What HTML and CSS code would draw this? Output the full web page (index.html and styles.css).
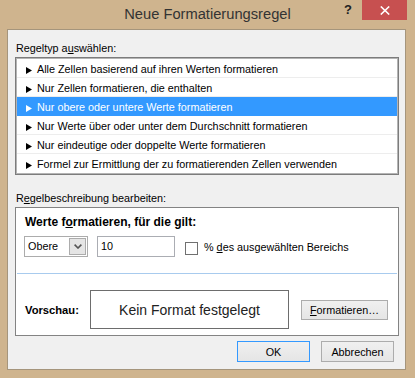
FILE: index.html
```html
<!DOCTYPE html>
<html lang="de">
<head>
<meta charset="utf-8">
<title>Neue Formatierungsregel</title>
<link rel="stylesheet" href="styles.css">
</head>
<body>
<div class="window">
  <div class="titlebar">
    <div class="tb-spacer"></div>
    <div class="title">Neue Formatierungsregel</div>
    <div class="tb-buttons">
      <span class="help">?</span>
      <span class="close"><svg width="10" height="9" viewBox="0 0 10 9"><path d="M0.8 0.5 L9.2 8.5 M9.2 0.5 L0.8 8.5" stroke="#fff" stroke-width="1.6" fill="none"/></svg></span>
    </div>
  </div>
  <div class="client">
    <div class="label">Regeltyp a<u>u</u>swählen:</div>
    <ul class="list">
      <li class="row"><svg class="arrow" viewBox="0 0 6 7"><polygon points="0,0 6,3.5 0,7"/></svg><span>Alle Zellen basierend auf ihren Werten formatieren</span></li>
      <li class="row"><svg class="arrow" viewBox="0 0 6 7"><polygon points="0,0 6,3.5 0,7"/></svg><span>Nur Zellen formatieren, die enthalten</span></li>
      <li class="row selected"><svg class="arrow" viewBox="0 0 6 7"><polygon points="0,0 6,3.5 0,7"/></svg><span>Nur obere oder untere Werte formatieren</span></li>
      <li class="row"><svg class="arrow" viewBox="0 0 6 7"><polygon points="0,0 6,3.5 0,7"/></svg><span>Nur Werte über oder unter dem Durchschnitt formatieren</span></li>
      <li class="row"><svg class="arrow" viewBox="0 0 6 7"><polygon points="0,0 6,3.5 0,7"/></svg><span>Nur eindeutige oder doppelte Werte formatieren</span></li>
      <li class="row"><svg class="arrow" viewBox="0 0 6 7"><polygon points="0,0 6,3.5 0,7"/></svg><span>Formel zur Ermittlung der zu formatierenden Zellen verwenden</span></li>
    </ul>
    <div class="label label2">R<u>e</u>gelbeschreibung bearbeiten:</div>
    <div class="panel">
      <div class="heading">Werte f<u>o</u>rmatieren, für die gilt:</div>
      <div class="controls">
        <div class="combo"><span class="combo-text">Obere</span><span class="combo-btn"><svg width="8" height="5" viewBox="0 0 8 5"><path d="M0.6 0.6 L4 4 L7.4 0.6" stroke="#555" stroke-width="1.6" fill="none"/></svg></span></div>
        <div class="input">10</div>
        <span class="checkbox"></span>
        <span class="check-label">% <u>d</u>es ausgewählten Bereichs</span>
      </div>
      <div class="sep"></div>
      <div class="preview-row">
        <div class="preview-label">Vorschau:</div>
        <div class="preview-box">Kein Format festgelegt</div>
        <div class="btn btn-format"><span><u>F</u>ormatieren…</span></div>
      </div>
    </div>
    <div class="actions">
      <div class="btn btn-ok">OK</div>
      <div class="btn">Abbrechen</div>
    </div>
  </div>
</div>
</body>
</html>
```

FILE: styles.css
```css
* { box-sizing: border-box; }
html, body { margin: 0; padding: 0; }
body {
  width: 415px;
  height: 378px;
  overflow: hidden;
  font-family: "Liberation Sans", Arial, sans-serif;
  font-size: 10.8px;
  color: #000;
}
u { text-decoration: underline; text-underline-offset: 1px; }

.window {
  width: 415px;
  height: 378px;
  background: #CFB48E;
  display: flex;
  flex-direction: column;
}

.titlebar {
  height: 29px;
  display: grid;
  grid-template-columns: 1fr auto 1fr;
}
.title {
  font-size: 14.7px;
  line-height: 29px;
  color: #333;
  white-space: nowrap;
}
.tb-buttons {
  display: flex;
  justify-content: flex-end;
  align-items: flex-start;
  padding-right: 8px;
}
.help {
  width: 20px;
  margin-right: 4px;
  font-weight: bold;
  font-size: 13px;
  line-height: 20px;
  color: #222;
  text-align: center;
}
.close {
  width: 45px;
  height: 20px;
  background: #C75050;
  display: flex;
  align-items: center;
  justify-content: center;
}
.close svg { display: block; }

.client {
  flex: 1;
  margin: 0 9px 8px 7px;
  background: #F0F0F0;
  border: 1px solid #A5957C;
  padding: 11px 6px 0 7px;
  display: flex;
  flex-direction: column;
}

.label {
  line-height: 14px;
  padding-left: 1px;
}
.label2 { margin-top: 16px; }

.list {
  margin: 2px 0 0;
  padding: 1px;
  list-style: none;
  background: #fff;
  border: 1px solid #7C7C7C;
  box-shadow: inset 0 0 0 1px #B4B4B4;
}
.row {
  height: 19px;
  display: flex;
  align-items: flex-start;
  padding-left: 9px;
  border-bottom: 1px solid #EDEDED;
  white-space: nowrap;
}
.row:last-child { border-bottom-color: transparent; }
.row span {
  line-height: 18px;
  padding-top: 1px;
}
.arrow {
  width: 6px;
  height: 7px;
  margin-top: 8px;
  margin-right: 5px;
  fill: #000;
  flex: none;
}
.row.selected {
  background: #3399FF;
  border-bottom-color: #3399FF;
  color: #fff;
}
.row.selected .arrow { fill: #fff; }

.panel {
  margin-top: 2px;
  height: 129px;
  background: #fff;
  border: 1px solid #838383;
}
.heading {
  font-weight: bold;
  font-size: 12px;
  line-height: 15px;
  padding: 7px 0 0 9px;
}
.controls {
  display: flex;
  align-items: center;
  height: 21px;
  margin-top: 6px;
  padding-left: 8px;
}
.combo {
  width: 64px;
  height: 21px;
  border: 1px solid #ACACAC;
  padding: 1px;
  display: flex;
  justify-content: space-between;
  align-items: center;
  background: #fff;
}
.combo-text { padding-left: 2px; line-height: 17px; }
.combo-btn {
  width: 17px;
  height: 17px;
  background: #E5E5E5;
  border: 1px solid #ACACAC;
  display: flex;
  align-items: center;
  justify-content: center;
}
.combo-btn svg { display: block; }
.input {
  width: 78px;
  height: 21px;
  margin-left: 9px;
  border: 1px solid #ABADB3;
  background: #fff;
  padding-left: 3px;
  line-height: 19px;
}
.checkbox {
  width: 13px;
  height: 13px;
  margin-left: 10px;
  align-self: flex-start;
  margin-top: 6px;
  border: 1px solid #707070;
  background: #fff;
}
.check-label {
  margin-left: 6px;
  line-height: 14px;
  white-space: nowrap;
}

.sep {
  height: 1px;
  margin: 16px 1px 0;
  background: #A8CBEE;
}

.preview-row {
  display: flex;
  align-items: center;
  margin-top: 16px;
  padding-left: 9px;
}
.preview-label {
  width: 65px;
  font-weight: bold;
  font-size: 11.2px;
}
.preview-box {
  width: 199px;
  height: 39px;
  border: 1px solid #6D6D6D;
  display: flex;
  align-items: center;
  justify-content: center;
  font-size: 14px;
  color: #222;
  white-space: nowrap;
}
.btn {
  display: flex;
  align-items: center;
  justify-content: center;
  border: 1px solid #ACACAC;
  background: linear-gradient(#F0F0F0, #E5E5E5);
  white-space: nowrap;
}
.btn-format {
  width: 87px;
  height: 20px;
  margin-left: 12px;
}

.actions {
  display: flex;
  justify-content: flex-end;
  gap: 11px;
  margin-top: 5px;
  padding-right: 5px;
}
.actions .btn {
  width: 73px;
  height: 21px;
}
.btn-ok { border-color: #3399FF; }
```
